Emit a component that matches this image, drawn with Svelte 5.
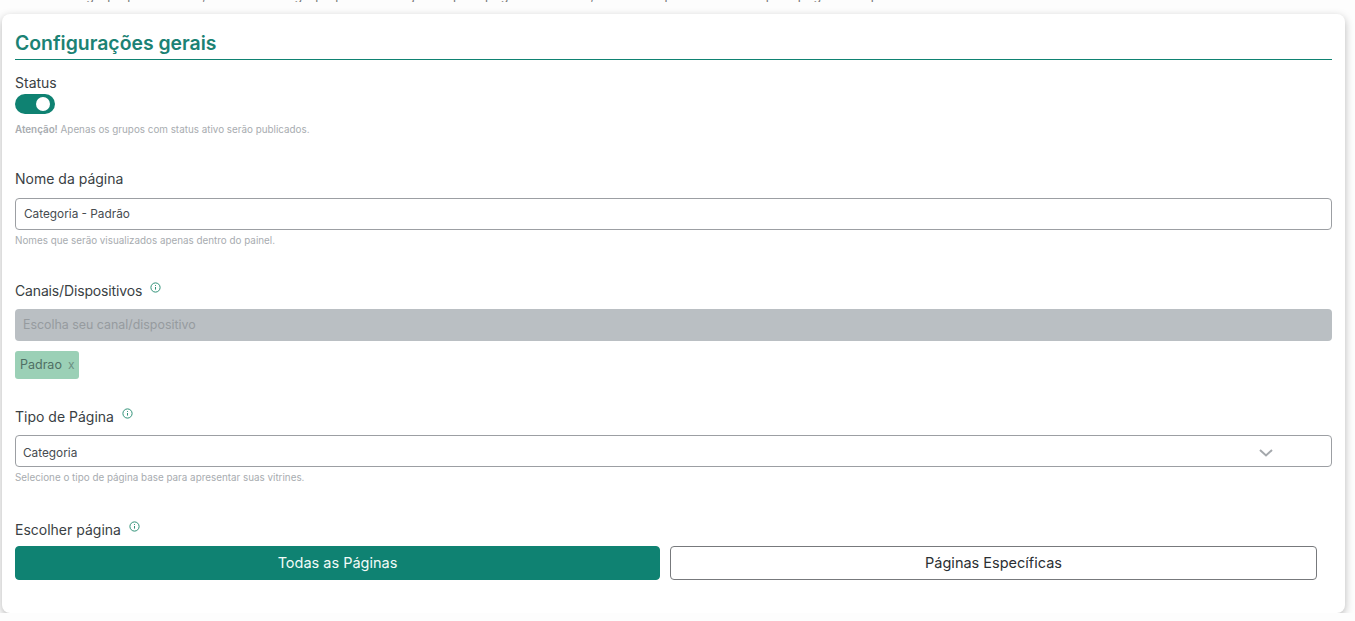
<script>
  let active = $state(true);
  let selected = $state('todas');
  let channels = $state(['Padrao']);

  function removeChannel(name) {
    channels = channels.filter((c) => c !== name);
  }
</script>

<style>
  :global(body) {
    background: #fdfdfd;
    font-family: Inter, "Open Sans", sans-serif;
    color: #212529;
  }

  .page {
    padding: 0 10px 0 2px;
  }

  .clipped {
    height: 2px;
    margin-bottom: 12px;
    padding-left: 48px;
    overflow: hidden;
    display: flex;
    align-items: flex-end;
    font-size: 12.5px;
    letter-spacing: 0.4px;
    line-height: 1;
    white-space: nowrap;
    color: #777;
  }

  .card {
    background: #fff;
    border-radius: 8px;
    box-shadow: 0 3px 8px rgba(0, 0, 0, 0.28);
    padding: 16px 13px 33px;
    box-sizing: border-box;
  }

  h2 {
    margin: 0;
    height: 29px;
    line-height: 26px;
    font-size: 19.4px;
    font-weight: 600;
    color: #1b8274;
    border-bottom: 1px solid #0f8272;
  }

  .field {
    display: flex;
    flex-direction: column;
  }

  .status {
    margin-top: 13px;
  }

  .name {
    margin-top: 32px;
  }

  .channels {
    margin-top: 33px;
  }

  .type {
    margin-top: 28px;
  }

  .choose {
    margin-top: 35px;
  }

  .label {
    display: flex;
    align-items: flex-start;
    gap: 8px;
    font-size: 14px;
    line-height: 20px;
    color: #3a3f44;
  }

  .channels .label {
    letter-spacing: -0.15px;
  }

  .label svg {
    margin-top: 1px;
  }

  .toggle {
    width: 40px;
    height: 20px;
    margin-top: 1px;
    padding: 0;
    border: 0;
    border-radius: 10px;
    background: #0f8272;
    display: flex;
    align-items: center;
    justify-content: flex-end;
  }

  .toggle span {
    width: 14px;
    height: 14px;
    margin-right: 5px;
    border-radius: 50%;
    background: #fff;
  }

  .help {
    margin: 3px 0 1px;
    font-size: 9.85px;
    line-height: 14px;
    color: #a8acb0;
  }

  .help b {
    font-weight: 600;
  }

  .status .help {
    margin-top: 8px;
  }

  .input {
    box-sizing: border-box;
    width: 100%;
    height: 32px;
    margin-top: 9px;
    padding: 0 8px;
    border: 1px solid #9c9fa3;
    border-radius: 4px;
    background: #fff;
    font: inherit;
    font-size: 11.8px;
    color: #464b50;
    display: flex;
    align-items: center;
    justify-content: space-between;
  }

  .disabled {
    margin-top: 8px;
    border: 0;
    background: #babfc3;
    color: #969b9f;
    padding: 0 8px 2px;
    font-size: 12.4px;
  }

  .select {
    margin-top: 8px;
    padding: 3px 58px 0 7px;
  }

  .chips {
    display: flex;
    gap: 6px;
    margin-top: 10px;
  }

  .chip {
    height: 28px;
    padding: 0 5px 2px;
    border: 0;
    border-radius: 3px;
    background: #9bd0b6;
    color: #4f6f64;
    font: inherit;
    font-size: 12.5px;
    display: flex;
    align-items: center;
    gap: 6px;
  }

  .chip i {
    font-style: normal;
    color: #6b8f82;
    font-size: 12px;
  }

  .buttons {
    display: grid;
    grid-template-columns: 645fr 647fr;
    gap: 10px;
    margin-top: 6px;
    padding-right: 15px;
  }

  .buttons button {
    height: 34px;
    padding-bottom: 3px;
    border-radius: 4px;
    border: 1px solid #77797c;
    background: #fff;
    font: inherit;
    font-size: 14.5px;
    color: #2b2f33;
  }

  .buttons button.on {
    background: #0f8272;
    border-color: #0f8272;
    color: #f2fbf8;
  }
</style>

{#snippet info()}
  <svg width="11" height="11" viewBox="0 0 11 11" fill="none" stroke="#2f9177" aria-hidden="true">
    <circle cx="5.5" cy="5.5" r="4.6" stroke-width="1" />
    <path d="M5.5 5v2.6M5.5 3v.9" stroke-width="1" />
  </svg>
{/snippet}

<div class="page">
  <div class="clipped">
    Cada grupo pode conter, e ainda cada grupo poderá ter ajustes para páginas e canais, e também pode ser usado para páginas de produto.
  </div>

  <section class="card">
    <h2>Configurações gerais</h2>

    <div class="field status">
      <div class="label">Status</div>
      <button class="toggle" aria-label="Status" onclick={() => (active = !active)}><span></span></button>
      <p class="help"><b>Atenção!</b> Apenas os grupos com status ativo serão publicados.</p>
    </div>

    <div class="field name">
      <div class="label">Nome da página</div>
      <div class="input">Categoria - Padrão</div>
      <p class="help">Nomes que serão visualizados apenas dentro do painel.</p>
    </div>

    <div class="field channels">
      <div class="label">Canais/Dispositivos {@render info()}</div>
      <div class="input disabled">Escolha seu canal/dispositivo</div>
      <div class="chips">
        {#each channels as channel}
          <button class="chip" onclick={() => removeChannel(channel)}>{channel} <i>x</i></button>
        {/each}
      </div>
    </div>

    <div class="field type">
      <div class="label">Tipo de Página {@render info()}</div>
      <div class="input select">
        Categoria
        <svg width="14" height="8" viewBox="0 0 14 8" fill="none" stroke="#a4a8ac" stroke-width="2" aria-hidden="true">
          <path d="M1 1l6 5.5L13 1" />
        </svg>
      </div>
      <p class="help">Selecione o tipo de página base para apresentar suas vitrines.</p>
    </div>

    <div class="field choose">
      <div class="label">Escolher página {@render info()}</div>
      <div class="buttons">
        <button class:on={selected === 'todas'} onclick={() => (selected = 'todas')}>Todas as Páginas</button>
        <button class:on={selected === 'especificas'} onclick={() => (selected = 'especificas')}>Páginas Específicas</button>
      </div>
    </div>
  </section>
</div>
